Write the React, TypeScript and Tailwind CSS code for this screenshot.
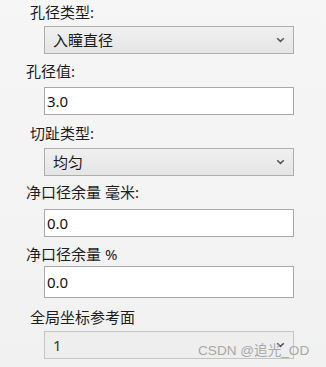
import React from "react";

function Chevron() {
  return (
    <svg width="9" height="6" viewBox="0 0 9 6" className="absolute right-[8px] top-1/2 -translate-y-1/2">
      <path d="M1.2 1.2 L4.5 4.4 L7.8 1.2" fill="none" stroke="#555" strokeWidth="1.5" />
    </svg>
  );
}

function Select({ value, mt, dim }: { value: string; mt: string; dim?: boolean }) {
  return (
    <div
      className={`relative ml-[44px] w-[250px] h-[28px] flex items-center pl-[8px] border ${
        dim ? "border-[#c4c4c4] bg-[#eeeeee] text-[#333]" : "border-[#adadad] bg-gradient-to-b from-[#f0f0f0] to-[#e5e5e5] text-[#1a1a1a]"
      } ${mt}`}
    >
      <span className="leading-none">{value}</span>
      <Chevron />
    </div>
  );
}

function Input({ value, mt, h }: { value: string; mt: string; h: string }) {
  return (
    <div className={`ml-[44px] w-[250px] ${h} flex items-center pl-[2px] border border-[#a9a9a9] bg-white text-[#111] ${mt}`}>
      <span className="leading-none">{value}</span>
    </div>
  );
}

export default function App() {
  return (
    <div
      className="relative w-[326px] h-[367px] overflow-hidden bg-gradient-to-b from-[#f6f6f6] to-[#f1f1f1] text-[15px] text-[#1e1e1e]"
      style={{ fontFamily: '"Noto Sans", "Noto Sans CJK SC", sans-serif' }}
    >
      <div className="flex flex-col">
        <div className="ml-[30px] mt-[2px] h-[20px] leading-[20px]">孔径类型:</div>
        <Select value="入瞳直径" mt="mt-[4px]" />
        <div className="ml-[26px] mt-[7px] h-[20px] leading-[20px]">孔径值:</div>
        <Input value="3.0" mt="mt-[6px]" h="h-[28px]" />
        <div className="ml-[30px] mt-[8px] h-[20px] leading-[20px]">切趾类型:</div>
        <Select value="均匀" mt="mt-[5px]" />
        <div className="ml-[26px] mt-[6px] h-[20px] leading-[20px]">净口径余量 毫米:</div>
        <Input value="0.0" mt="mt-[7px]" h="h-[28px]" />
        <div className="ml-[26px] mt-[7px] h-[20px] leading-[20px]">净口径余量 %</div>
        <Input value="0.0" mt="mt-[2px]" h="h-[32px]" />
        <div className="ml-[30px] mt-[9px] h-[20px] leading-[20px]">全局坐标参考面</div>
        <Select value="1" mt="mt-[4px]" dim />
      </div>
      <div
        className="absolute left-[198px] top-[342px] text-[13.6px] leading-[18px] text-[#a8a8a8]"
        style={{ fontFamily: '"Liberation Sans", "Noto Sans CJK SC", sans-serif' }}
      >
        CSDN @追光_OD
      </div>
    </div>
  );
}
